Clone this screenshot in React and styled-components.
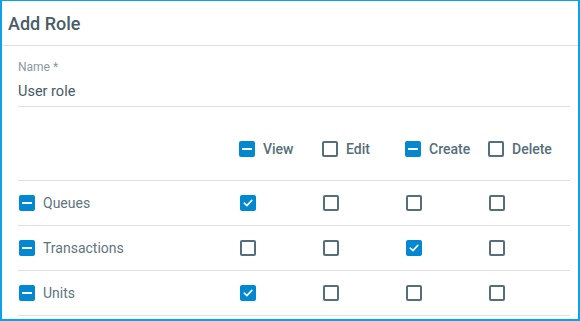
import React, { useState } from 'react';
import styled, { createGlobalStyle } from 'styled-components';

const GlobalStyle = createGlobalStyle`
  html, body {
    margin: 0;
    padding: 0;
    background: #ffffff;
  }
  body {
    font-family: Roboto, "Liberation Sans", sans-serif;
  }
`;

const COLUMNS = ['View', 'Edit', 'Create', 'Delete'];

const initialRows = [
  { id: 'queues', name: 'Queues', perms: [true, false, false, false] },
  { id: 'transactions', name: 'Transactions', perms: [false, false, true, false] },
  { id: 'units', name: 'Units', perms: [true, false, false, false] },
];

const Box = ({ state }) => (
  <Check $on={state !== 'off'}>
    {state === 'mixed' && <Dash />}
    {state === 'on' && (
      <svg width="12" height="12" viewBox="0 0 12 12">
        <path d="M2.3 6.2 L4.9 8.6 L9.8 3.4" fill="none" stroke="#fff" strokeWidth="1.6" strokeLinecap="round" strokeLinejoin="round" />
      </svg>
    )}
  </Check>
);

const App = () => {
  const [rows] = useState(initialRows);

  const columnState = (i) => {
    const count = rows.filter((r) => r.perms[i]).length;
    if (count === 0) return 'off';
    if (count === rows.length) return 'on';
    return 'mixed';
  };

  const rowState = (row) => {
    const count = row.perms.filter(Boolean).length;
    if (count === 0) return 'off';
    if (count === row.perms.length) return 'on';
    return 'mixed';
  };

  return (
    <>
      <GlobalStyle />
      <Card>
        <Header>
          <Title>Add Role</Title>
        </Header>
        <Body>
          <Field>
            <Label>Name *</Label>
            <Value>User role</Value>
          </Field>
          <Table>
            <HeadRow>
              <Cell />
              {COLUMNS.map((c, i) => (
                <Cell key={c} $pad={1}>
                  <Box state={columnState(i)} />
                  <HeadText>{c}</HeadText>
                </Cell>
              ))}
            </HeadRow>
            {rows.map((row) => (
              <Row key={row.id}>
                <Cell $pad={1}>
                  <Box state={rowState(row)} />
                  <RowText>{row.name}</RowText>
                </Cell>
                {row.perms.map((p, i) => (
                  <Cell key={i} $pad={2}>
                    <Box state={p ? 'on' : 'off'} />
                  </Cell>
                ))}
              </Row>
            ))}
          </Table>
        </Body>
      </Card>
    </>
  );
};

const Card = styled.div`
  box-sizing: border-box;
  width: 580px;
  height: 321px;
  border: 2px solid #0ea1e6;
  border-top-width: 1px;
  background: #fff;
  overflow: hidden;
`;
const Header = styled.div`
  height: 44px;
  display: flex;
  align-items: center;
  padding: 0 6px;
  border-bottom: 1px solid #e0e0e0;
`;
const Title = styled.h1`
  margin: 0;
  font-size: 18px;
  font-weight: 500;
  color: #4a5d67;
`;
const Body = styled.div`
  padding: 14px 8px 0 16px;
`;
const Field = styled.div`
  display: flex;
  flex-direction: column;
  border-bottom: 1px solid #e0e0e0;
  padding-bottom: 5px;
`;
const Label = styled.label`
  font-size: 12px;
  line-height: 15px;
  color: #8a9aa3;
`;
const Value = styled.div`
  margin-top: 8px;
  font-size: 14.5px;
  line-height: 18px;
  color: #455a64;
`;
const Table = styled.div`
  display: flex;
  flex-direction: column;
`;
const HeadRow = styled.div`
  display: grid;
  grid-template-columns: 1fr repeat(4, 83px);
  height: 63px;
  padding-top: 10px;
  align-items: center;
  border-bottom: 1px solid #e0e0e0;
`;
const Row = styled.div`
  display: grid;
  grid-template-columns: 1fr repeat(4, 83px);
  height: 44px;
  align-items: center;
  border-bottom: 1px solid #e0e0e0;
`;
const Cell = styled.div`
  display: flex;
  align-items: center;
  gap: 8px;
  padding-left: ${(p) => p.$pad || 0}px;
`;
const Check = styled.span`
  box-sizing: border-box;
  flex: none;
  width: 16px;
  height: 16px;
  border-radius: 2px;
  display: flex;
  align-items: center;
  justify-content: center;
  background: ${(p) => (p.$on ? '#0288d1' : '#fff')};
  border: ${(p) => (p.$on ? 'none' : '2px solid #546e7a')};
`;
const Dash = styled.span`
  width: 10px;
  height: 2px;
  background: #fff;
`;
const HeadText = styled.span`
  font-size: 14px;
  font-weight: 500;
  color: #546e7a;
`;
const RowText = styled.span`
  font-size: 14px;
  color: #607580;
`;

export default App;
